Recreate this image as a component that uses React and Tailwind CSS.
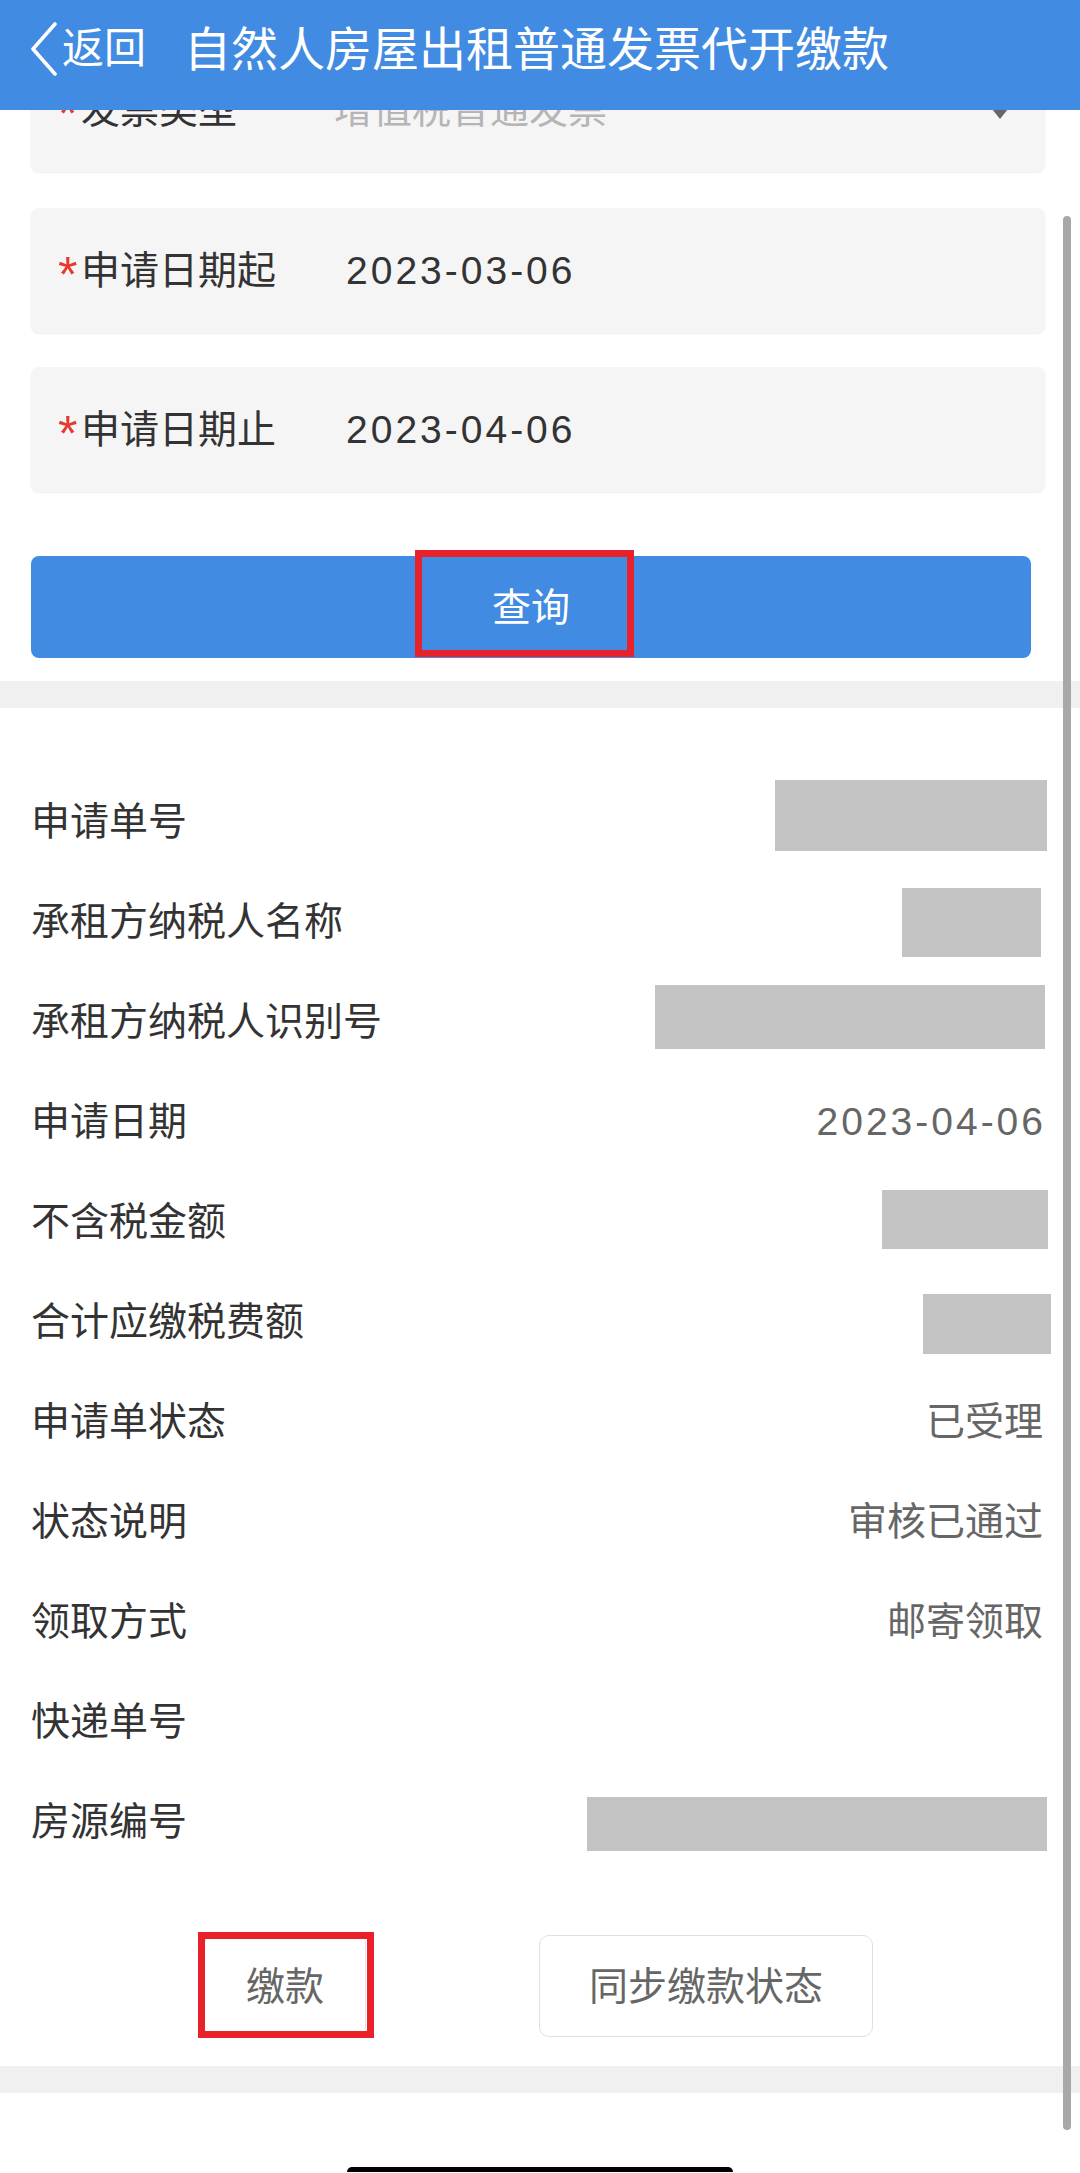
import React from "react";

// rows of the result panel; a box stands for a redacted value
const rows = [
  { label: "申请单号", box: "w-[272px] h-[71px] -mr-[4px] mb-[11px]" },
  { label: "承租方纳税人名称", box: "w-[139px] h-[69px] mr-[2px] mt-[3px]" },
  { label: "承租方纳税人识别号", box: "w-[390px] h-[64px] -mr-[2px] mb-[8px]" },
  { label: "申请日期", value: "2023-04-06", date: true },
  { label: "不含税金额", box: "w-[166px] h-[59px] -mr-[5px] mb-[3px]" },
  { label: "合计应缴税费额", box: "w-[128px] h-[60px] -mr-[8px] mt-[6px]" },
  { label: "申请单状态", value: "已受理" },
  { label: "状态说明", value: "审核已通过" },
  { label: "领取方式", value: "邮寄领取" },
  { label: "快递单号" },
  { label: "房源编号", box: "w-[460px] h-[54px] -mr-[4px] mt-[6px]" },
];

const FormCard = ({ label, value, placeholder, select }) => {
  return (
    <div className="mx-[31px] mr-[35px] h-[125px] rounded-[8px] bg-[#f5f5f5] shadow-[0_1px_2px_rgba(0,0,0,0.07)] flex items-center pl-[27px] pr-[37px]">
      <div className="w-[288px] flex items-start text-[39px] leading-none text-[#333]">
        <span className="h-[39px] text-[50px] leading-none text-[#e8392f] w-[23px] -mt-[1px]">*</span>
        <span>{label}</span>
      </div>
      {placeholder ? (
        <span className="-ml-[12px] flex-1 text-[39px] leading-none text-[#b5b5b5]">
          {placeholder}
        </span>
      ) : (
        <span className="flex-1 text-[39px] leading-none text-[#333] tracking-[3px]">
          {value}
        </span>
      )}
      {select && (
        <svg width="16" height="10" viewBox="0 0 16 10" className="mt-[8px]">
          <polygon points="0,0 16,0 8,10" fill="#666" />
        </svg>
      )}
    </div>
  );
};

const App = () => {
  return (
    <div className='relative w-[1080px] h-[2173px] overflow-hidden bg-white font-[family-name:"Liberation_Sans","Noto_Sans_CJK_SC",sans-serif]'>
      {/* header sits over the scrolled form */}
      <div className="absolute top-0 left-0 z-10 w-full h-[110px] bg-[#428be2] flex items-center pb-[12px] text-white">
        <svg width="28" height="54" viewBox="0 0 28 54" className="ml-[30px]">
          <polyline
            points="25,2 3,27 25,52"
            fill="none"
            stroke="#fff"
            strokeWidth="3.6"
            strokeLinecap="round"
            strokeLinejoin="round"
          />
        </svg>
        <span className="ml-[4px] text-[42px] leading-none">返回</span>
        <span className="ml-[38px] text-[47px] leading-none">
          自然人房屋出租普通发票代开缴款
        </span>
      </div>

      {/* scrollbar */}
      <div className="absolute z-10 left-[1063px] top-[216px] w-[8px] h-[1914px] rounded-full bg-[#a8a8a8]" />

      <div className="pt-[47px] flex flex-col">
        <FormCard label="发票类型" placeholder="增值税普通发票" select />
        <div className="h-[36px]" />
        <FormCard label="申请日期起" value="2023-03-06" />
        <div className="h-[34px]" />
        <FormCard label="申请日期止" value="2023-04-06" />

        <div className="mt-[64px] ml-[31px] mr-[49px]">
          <button className="relative w-full h-[102px] rounded-[8px] bg-[#428be2] text-white text-[39px] leading-none">
            查询
            <span className="absolute left-[384px] -top-[6px] w-[219px] h-[107px] border-[7px] border-[#e8212b]" />
          </button>
        </div>

        <div className="mt-[23px] h-[27px] bg-[#f0f0f0]" />

        <div className="mt-[63px] flex flex-col">
          {rows.map((row) => (
            <div
              key={row.label}
              className="h-[100px] flex items-center justify-between pl-[31px] pr-[37px]"
            >
              <span className="text-[39px] leading-none text-[#333]">
                {row.label}
              </span>
              {row.box && <div className={`bg-[#c3c3c3] ${row.box}`} />}
              {row.value && (
                <span
                  className={
                    row.date
                      ? "text-[39px] leading-none text-[#666] tracking-[3px] -mr-[3px]"
                      : "text-[39px] leading-none text-[#666]"
                  }
                >
                  {row.value}
                </span>
              )}
            </div>
          ))}
        </div>

        <div className="mt-[64px] flex pl-[204px] gap-[173px]">
          <button className="relative w-[162px] h-[102px] rounded-[8px] border border-[#e2e2e2] bg-white text-[39px] leading-none text-[#666]">
            缴款
            <span className="absolute -left-[7px] -top-[4px] w-[176px] h-[106px] border-[7px] border-[#e8212b]" />
          </button>
          <button className="w-[334px] h-[102px] rounded-[10px] border border-[#e0e0e0] bg-white text-[39px] leading-none text-[#666]">
            同步缴款状态
          </button>
        </div>

        <div className="mt-[29px] h-[27px] bg-[#f0f0f0]" />

        <div className="h-[79px] flex items-end justify-center">
          <div className="w-[386px] h-[5px] rounded-t-full bg-black" />
        </div>
      </div>
    </div>
  );
};

export default App;
